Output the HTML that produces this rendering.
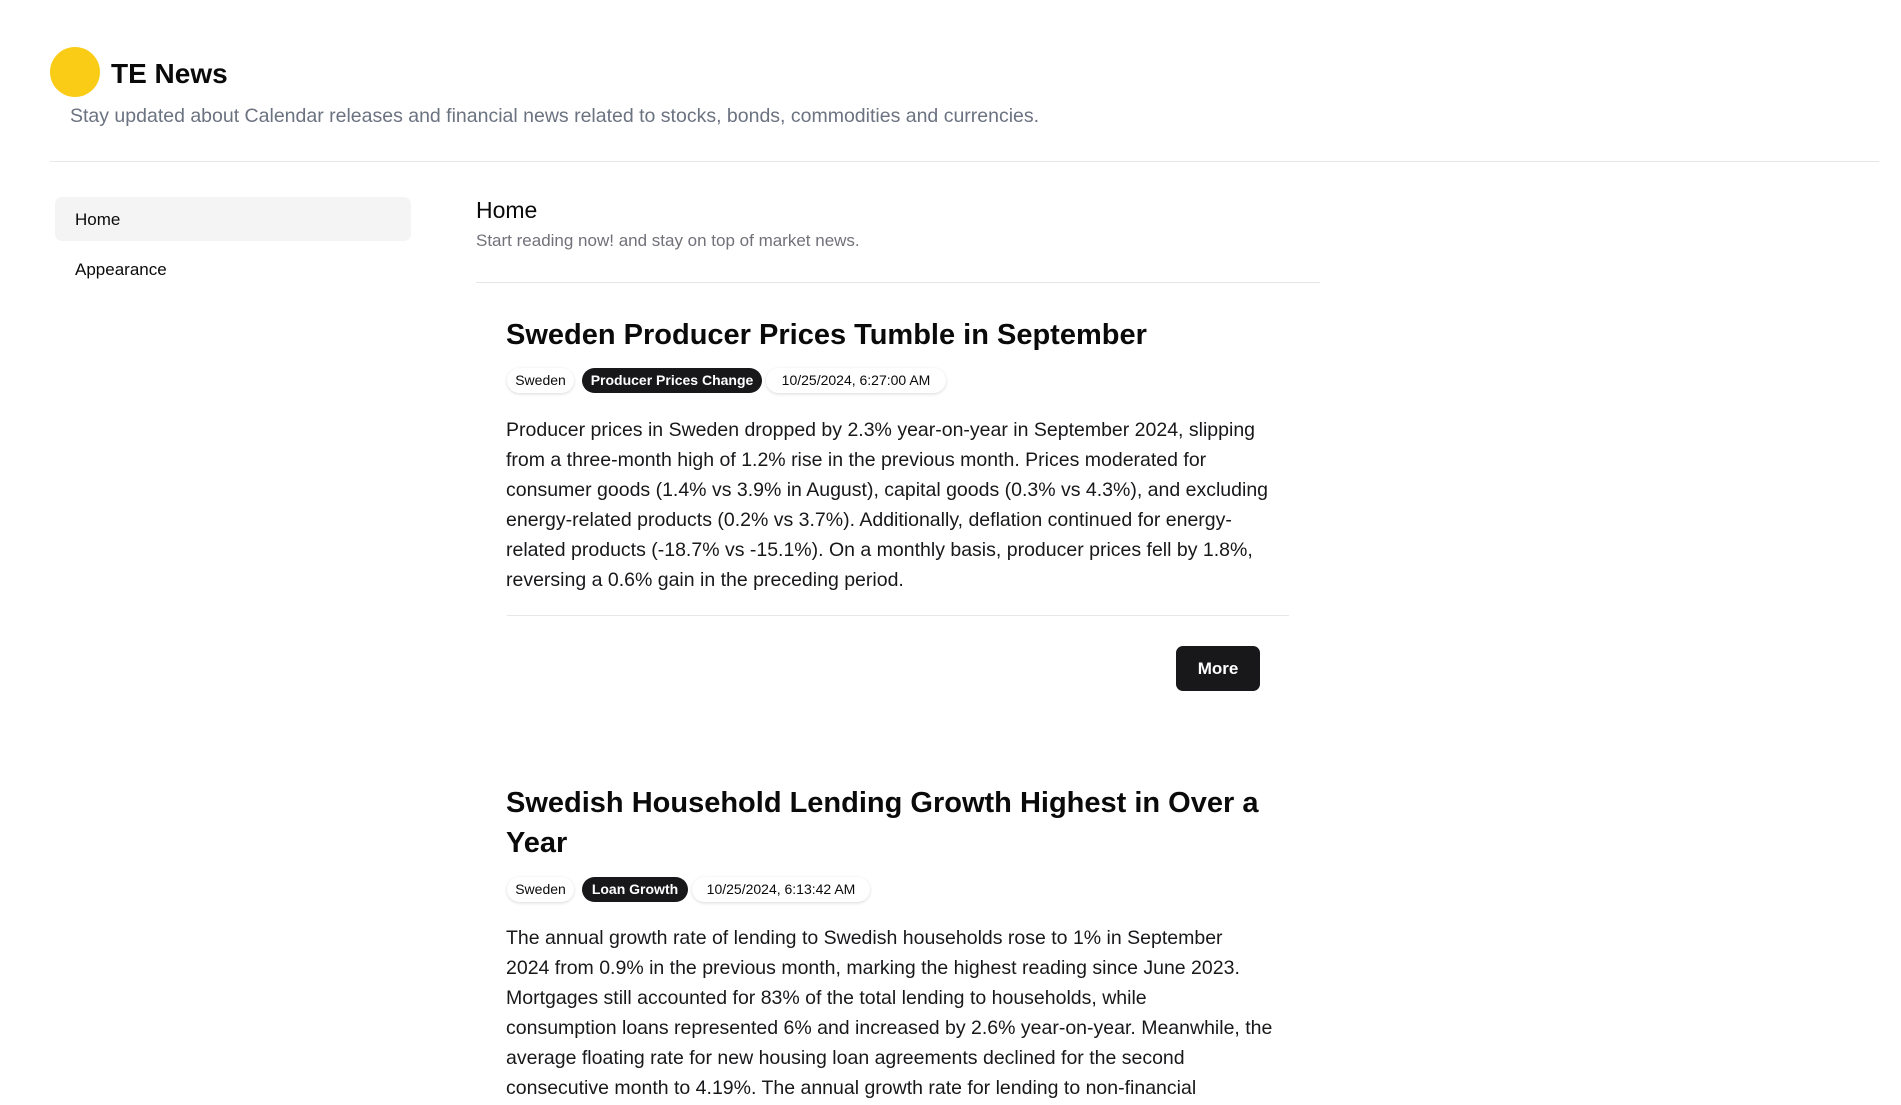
<!DOCTYPE html>
<html><head><meta charset="utf-8"><style>
*{margin:0;padding:0;box-sizing:border-box}
body{width:1901px;height:1105px;overflow:hidden;background:#fff;font-family:"Liberation Sans",sans-serif;color:#0a0a0a;position:relative}
.a{position:absolute;white-space:nowrap}
.logo{left:50px;top:47px;width:50px;height:50px;border-radius:50%;background:#facc15}
.hr{position:absolute;height:1px;background:#e5e7eb}
.badge{position:absolute;height:25px;border-radius:13px;font-size:14px;line-height:25px;text-align:center;background:#fff;box-shadow:0 1px 3px rgba(0,0,0,.15)}
.dk{background:#18181b;color:#fff;box-shadow:none;font-weight:bold}
.p{font-size:19.5px;line-height:30px;color:#18181b}
.t{font-size:29px;font-weight:bold;line-height:40px}
</style></head><body>
<div class="a logo"></div>
<div class="a" style="left:111px;top:56px;font-size:28px;font-weight:bold;line-height:36px">TE News</div>
<div class="a" style="left:70px;top:104px;font-size:19.5px;line-height:24px;color:#6b7280">Stay updated about Calendar releases and financial news related to stocks, bonds, commodities and currencies.</div>
<div class="hr" style="left:50px;top:161px;width:1829px"></div>

<div class="a" style="left:55px;top:197px;width:356px;height:44px;border-radius:7px;background:#f4f4f5"></div>
<div class="a" style="left:75px;top:209px;font-size:17px;line-height:22px">Home</div>
<div class="a" style="left:75px;top:259px;font-size:17px;line-height:22px">Appearance</div>

<div class="a" style="left:476px;top:195px;font-size:23px;line-height:30px">Home</div>
<div class="a" style="left:476px;top:230px;font-size:17px;line-height:22px;color:#71717a">Start reading now! and stay on top of market news.</div>
<div class="hr" style="left:476px;top:282px;width:844px"></div>

<div class="a t" style="left:506px;top:315px">Sweden Producer Prices Tumble in September</div>
<div class="badge" style="left:507px;top:368px;width:67px">Sweden</div>
<div class="badge dk" style="left:582px;top:368px;width:180px">Producer Prices Change</div>
<div class="badge" style="left:766px;top:368px;width:180px">10/25/2024, 6:27:00 AM</div>
<div class="a p" style="left:506px;top:415px">Producer prices in Sweden dropped by 2.3% year-on-year in September 2024, slipping<br>from a three-month high of 1.2% rise in the previous month. Prices moderated for<br>consumer goods (1.4% vs 3.9% in August), capital goods (0.3% vs 4.3%), and excluding<br>energy-related products (0.2% vs 3.7%). Additionally, deflation continued for energy-<br>related products (-18.7% vs -15.1%). On a monthly basis, producer prices fell by 1.8%,<br>reversing a 0.6% gain in the preceding period.</div>
<div class="hr" style="left:507px;top:615px;width:782px"></div>
<div class="a" style="left:1176px;top:646px;width:84px;height:45px;border-radius:7px;background:#18181b;color:#fff;font-weight:bold;font-size:17px;line-height:45px;text-align:center">More</div>

<div class="a t" style="left:506px;top:783px">Swedish Household Lending Growth Highest in Over a<br>Year</div>
<div class="badge" style="left:507px;top:877px;width:67px">Sweden</div>
<div class="badge dk" style="left:582px;top:877px;width:106px">Loan Growth</div>
<div class="badge" style="left:692px;top:877px;width:178px">10/25/2024, 6:13:42 AM</div>
<div class="a p" style="left:506px;top:923px">The annual growth rate of lending to Swedish households rose to 1% in September<br>2024 from 0.9% in the previous month, marking the highest reading since June 2023.<br>Mortgages still accounted for 83% of the total lending to households, while<br>consumption loans represented 6% and increased by 2.6% year-on-year. Meanwhile, the<br>average floating rate for new housing loan agreements declined for the second<br>consecutive month to 4.19%. The annual growth rate for lending to non-financial</div>
</body></html>
